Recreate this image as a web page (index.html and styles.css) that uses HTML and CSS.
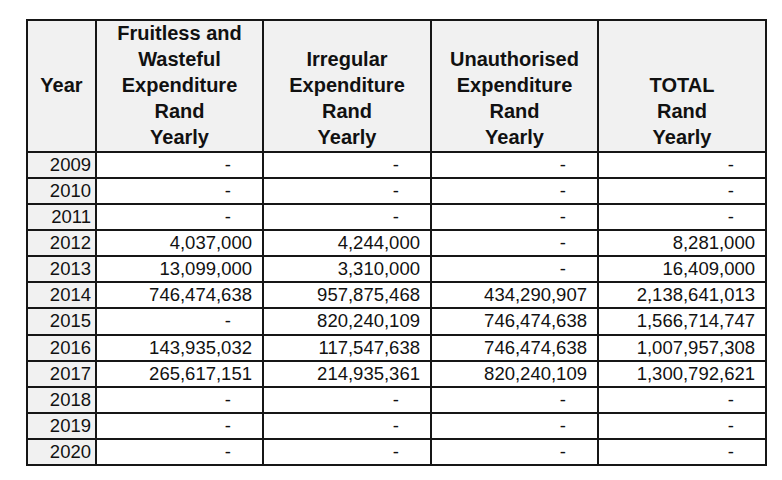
FILE: index.html
```html
<!DOCTYPE html>
<html lang="en">
<head>
<meta charset="utf-8">
<title>Expenditure Table</title>
<link rel="stylesheet" href="styles.css">
</head>
<body>
<div class="page">
<table class="exp">
<colgroup>
<col class="c-year"><col class="c-fw"><col class="c-ir"><col class="c-un"><col class="c-tot">
</colgroup>
<thead>
<tr>
<th class="h-year">Year</th>
<th>Fruitless and<br>Wasteful<br>Expenditure<br>Rand<br>Yearly</th>
<th>Irregular<br>Expenditure<br>Rand<br>Yearly</th>
<th>Unauthorised<br>Expenditure<br>Rand<br>Yearly</th>
<th>TOTAL<br>Rand<br>Yearly</th>
</tr>
</thead>
<tbody>
<tr><td class="yr">2009</td><td class="dash">-</td><td class="dash">-</td><td class="dash">-</td><td class="dash">-</td></tr>
<tr><td class="yr">2010</td><td class="dash">-</td><td class="dash">-</td><td class="dash">-</td><td class="dash">-</td></tr>
<tr><td class="yr">2011</td><td class="dash">-</td><td class="dash">-</td><td class="dash">-</td><td class="dash">-</td></tr>
<tr><td class="yr">2012</td><td>4,037,000</td><td>4,244,000</td><td class="dash">-</td><td>8,281,000</td></tr>
<tr><td class="yr">2013</td><td>13,099,000</td><td>3,310,000</td><td class="dash">-</td><td>16,409,000</td></tr>
<tr><td class="yr">2014</td><td>746,474,638</td><td>957,875,468</td><td>434,290,907</td><td>2,138,641,013</td></tr>
<tr><td class="yr">2015</td><td class="dash">-</td><td>820,240,109</td><td>746,474,638</td><td>1,566,714,747</td></tr>
<tr><td class="yr">2016</td><td>143,935,032</td><td>117,547,638</td><td>746,474,638</td><td>1,007,957,308</td></tr>
<tr><td class="yr">2017</td><td>265,617,151</td><td>214,935,361</td><td>820,240,109</td><td>1,300,792,621</td></tr>
<tr><td class="yr">2018</td><td class="dash">-</td><td class="dash">-</td><td class="dash">-</td><td class="dash">-</td></tr>
<tr><td class="yr">2019</td><td class="dash">-</td><td class="dash">-</td><td class="dash">-</td><td class="dash">-</td></tr>
<tr><td class="yr">2020</td><td class="dash">-</td><td class="dash">-</td><td class="dash">-</td><td class="dash">-</td></tr>
</tbody>
</table>
</div>
</body>
</html>
```

FILE: styles.css
```css
html, body {
  margin: 0;
  padding: 0;
  background: #ffffff;
}

.page {
  padding: 19px 0 0 26px;
}

.exp {
  border-collapse: collapse;
  table-layout: fixed;
  width: 739px;
  font-family: "Liberation Sans", Arial, sans-serif;
  color: #111111;
}

.c-year { width: 69px; }
.c-fw { width: 167px; }
.c-ir { width: 168px; }
.c-un { width: 167px; }
.c-tot { width: 168px; }

.exp th,
.exp td {
  border: 2px solid #161616;
}

.exp th {
  background: #f1f1f1;
  font-size: 20px;
  font-weight: bold;
  line-height: 25.9px;
  padding: 0;
  text-align: center;
  vertical-align: bottom;
}

.exp th.h-year {
  vertical-align: middle;
}

.exp td {
  font-size: 18.5px;
  line-height: 20px;
  height: 24.15px;
  padding: 0 10px 0 0;
  text-align: right;
  vertical-align: middle;
  background: #ffffff;
  white-space: nowrap;
}

.exp td.yr {
  background: #f1f1f1;
  padding-right: 4px;
}

.exp td.dash {
  padding-right: 31px;
}
```
